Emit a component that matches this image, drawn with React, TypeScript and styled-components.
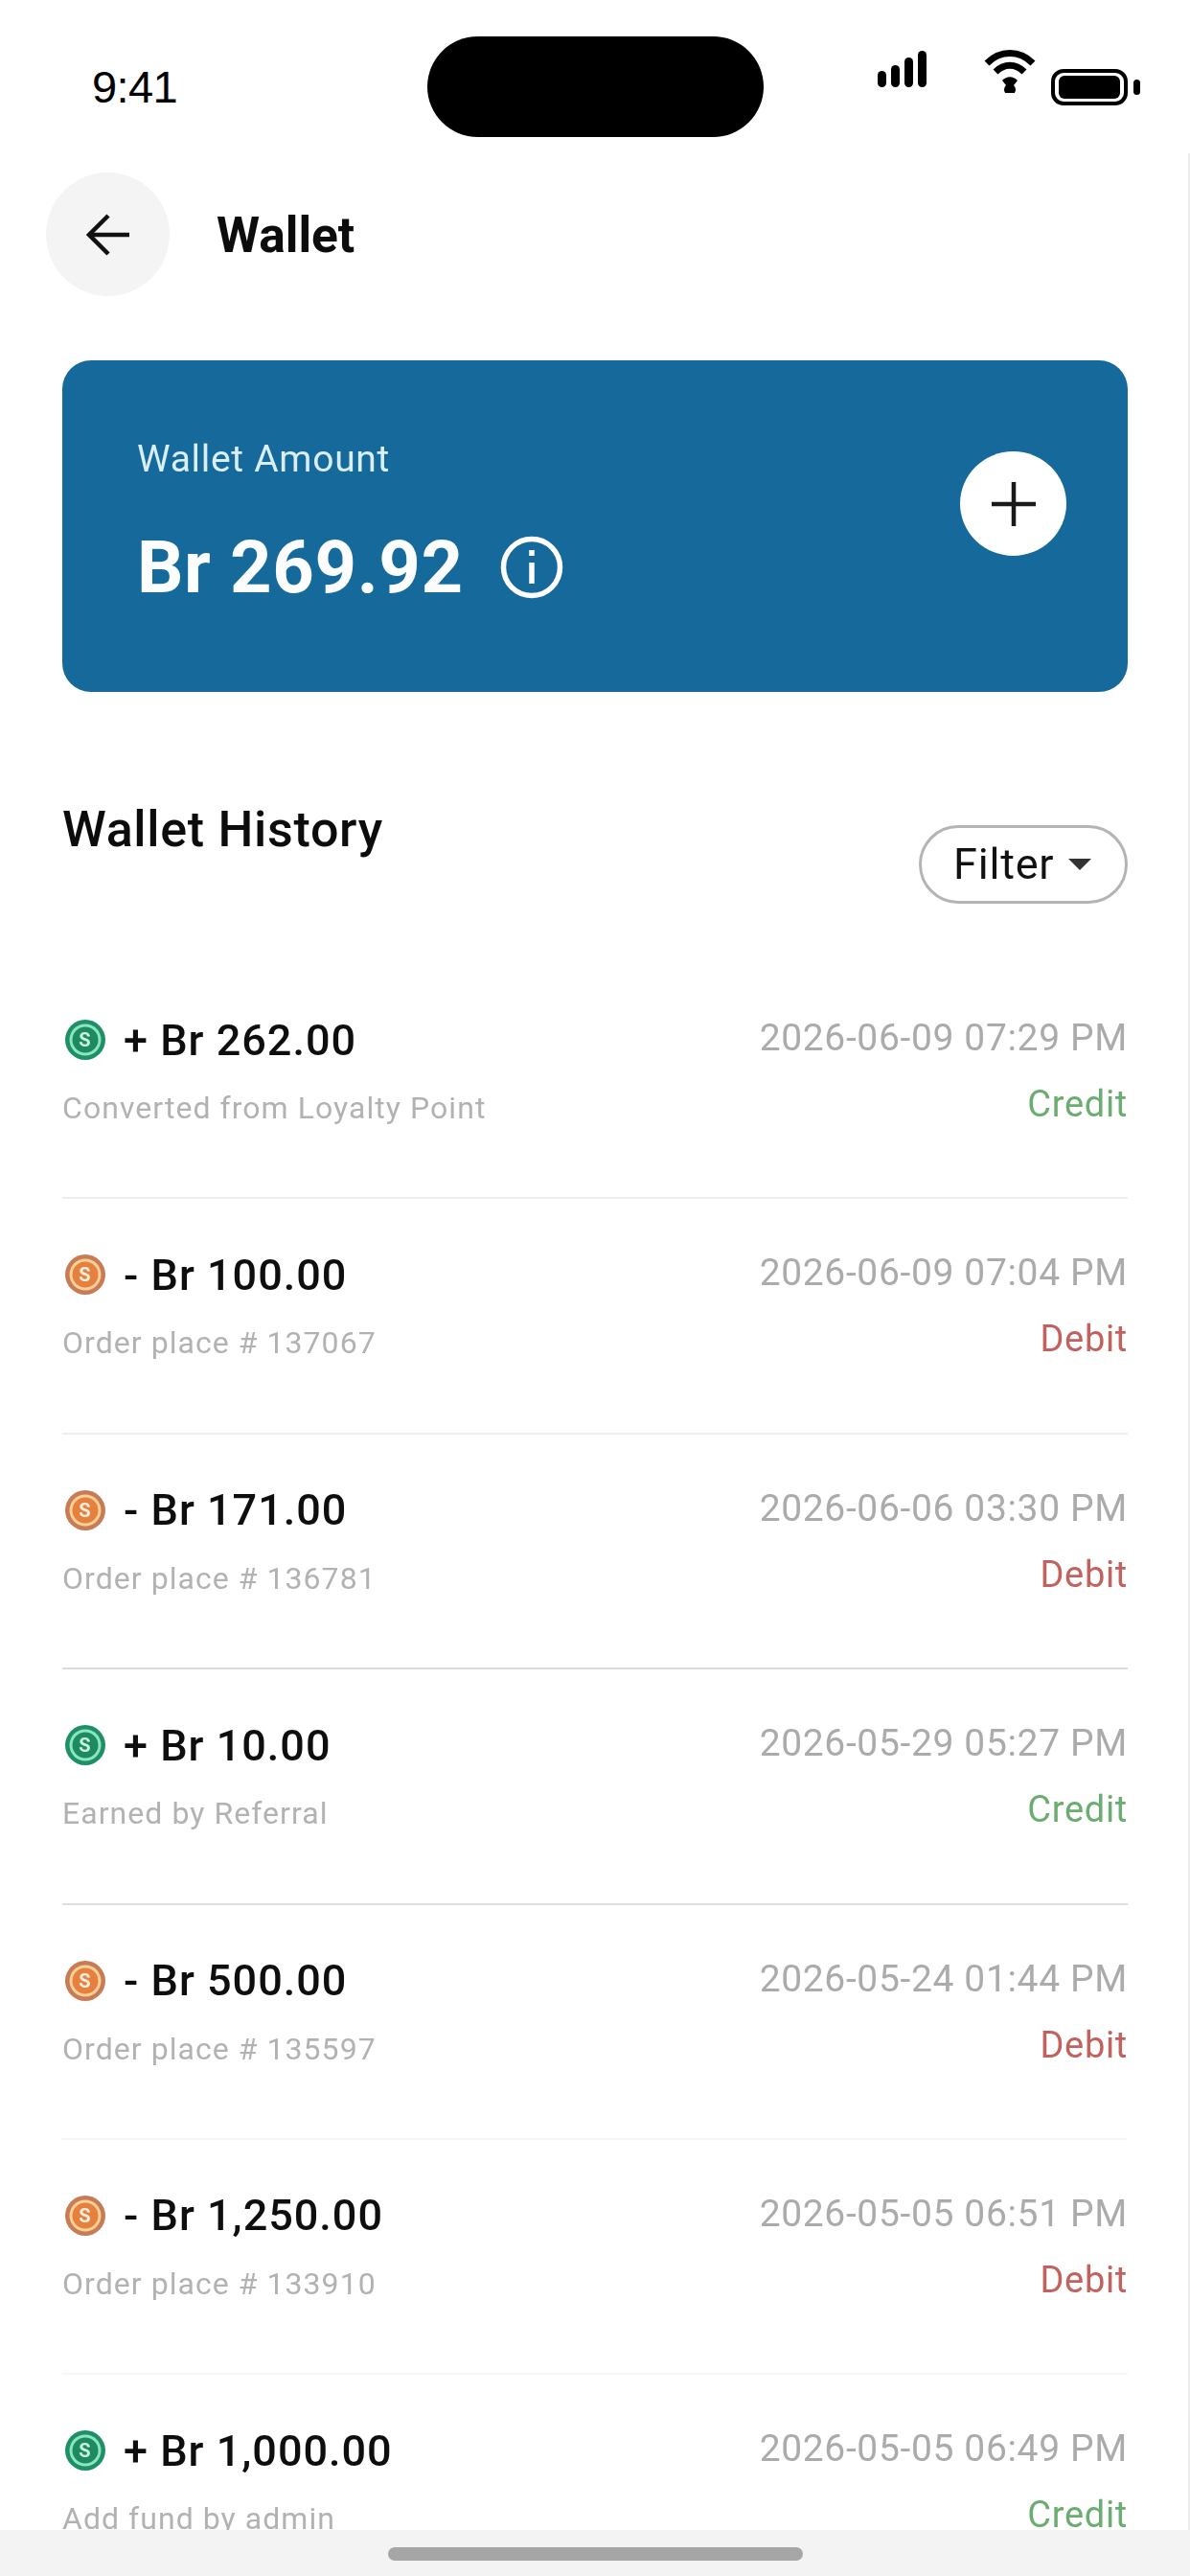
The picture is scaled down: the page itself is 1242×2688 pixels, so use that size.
import { FC } from "react";
import styled, { createGlobalStyle } from "styled-components";

const GlobalStyle = createGlobalStyle`
  html, body { margin: 0; padding: 0; background: #fff; }
  * { box-sizing: border-box; }
`;

// page shell
const Page = styled.div`
  width: 1242px;
  height: 2688px;
  display: flex;
  flex-direction: column;
  overflow: hidden;
  background: #fff;
  font-family: Roboto, "Liberation Sans", sans-serif;
  color: #0c0c0c;
`;

// status bar
const StatusBar = styled.div`
  height: 160px;
  flex: none;
  display: flex;
  align-items: flex-start;
  padding: 38px 0 0 96px;
`;

const Clock = styled.div`
  width: 350px;
  margin-top: 30px;
  font: 400 47px/46px "Liberation Sans", Arial, sans-serif;
  letter-spacing: -0.6px;
  color: #000;
`;

const Island = styled.div`
  width: 351px;
  height: 105px;
  border-radius: 53px;
  background: #000;
`;

const StatusIcons = styled.div`
  display: flex;
  align-items: flex-start;
  margin-left: 119px;
  svg { display: block; flex: none; }
`;

const Signal = styled.svg`
  margin-top: 15px;
`;

const Wifi = styled.svg`
  margin: 13px 0 0 60px;
`;

const Battery = styled.svg`
  margin: 34px 0 0 16px;
`;

// the app area of the screenshot is soft, the status bar is not
const Body = styled.main`
  flex: 1;
  min-height: 0;
  overflow: hidden;
  border-right: 2px solid #ececec;
  filter: blur(0.7px);
`;

// header
const Header = styled.header`
  display: flex;
  align-items: center;
  gap: 49px;
  padding: 20px 0 0 48px;
`;

const BackButton = styled.button`
  width: 129px;
  height: 129px;
  border: 0;
  border-radius: 50%;
  padding: 0;
  display: flex;
  align-items: center;
  justify-content: center;
  background: #f4f4f4;
`;

const Title = styled.h1`
  margin: 2px 0 0;
  font-size: 51.5px;
  line-height: 60px;
  font-weight: 700;
`;

// wallet card
const Card = styled.section`
  margin: 67px 63px 0 65px;
  height: 346px;
  border-radius: 30px;
  background: #16699b;
  display: flex;
  align-items: flex-start;
  justify-content: space-between;
  padding: 81px 64px 0 78px;
`;

const CardLabel = styled.div`
  font-size: 39px;
  line-height: 44px;
  letter-spacing: 0.7px;
  color: #d9eef7;
`;

const Balance = styled.div`
  display: flex;
  align-items: center;
  gap: 38px;
  margin-top: 48px;
  font-size: 76px;
  line-height: 86px;
  font-weight: 700;
  letter-spacing: 0.6px;
  color: #fbfdfe;
`;

const AddButton = styled.button`
  width: 111px;
  height: 109px;
  margin-top: 14px;
  border: 0;
  border-radius: 50%;
  padding: 0;
  display: flex;
  align-items: center;
  justify-content: center;
  background: #fff;
`;

// history
const HistoryHead = styled.div`
  display: flex;
  align-items: flex-start;
  justify-content: space-between;
  margin: 114px 63px 0 65px;
`;

const HistoryTitle = styled.h2`
  margin: 0;
  font-size: 52px;
  line-height: 60px;
  font-weight: 500;
  letter-spacing: 0.7px;
`;

const FilterButton = styled.button`
  width: 218px;
  height: 82px;
  margin-top: 25px;
  border: 3px solid #b4b4b4;
  border-radius: 41px;
  padding: 0 0 0 33px;
  display: flex;
  align-items: center;
  gap: 15px;
  background: #fff;
  font: 400 45px/50px Roboto, sans-serif;
  letter-spacing: 0.8px;
  color: #111;
`;

const List = styled.div`
  margin: 63px 63px 0 65px;
`;

const Row = styled.div<{ $line: string }>`
  height: 245.4px;
  padding-top: 53px;
  display: grid;
  grid-template-columns: 1fr auto;
  align-content: start;
  row-gap: 18px;
  border-bottom: 2px solid ${({ $line }) => $line};
`;

const Amount = styled.div`
  display: flex;
  align-items: center;
  gap: 19px;
  height: 52px;
  padding-left: 3px;
  font-size: 45px;
  font-weight: 500;
  letter-spacing: 1px;
  color: #0e0e0e;
  svg { flex: none; }
`;

const DateText = styled.div`
  height: 52px;
  line-height: 48px;
  text-align: right;
  font-size: 39px;
  letter-spacing: 0.65px;
  color: #ababab;
`;

const Note = styled.div`
  font-size: 32px;
  line-height: 40px;
  letter-spacing: 1.05px;
  color: #b2b2b2;
  margin-top: 7px;
`;

const Kind = styled.div<{ $credit: boolean }>`
  text-align: right;
  font-size: 38px;
  line-height: 44px;
  letter-spacing: 0.7px;
  margin-top: 1px;
  color: ${({ $credit }) => ($credit ? "#6bad70" : "#c2625e")};
`;

// bottom bar
const HomeBar = styled.div`
  height: 48px;
  flex: none;
  display: flex;
  justify-content: center;
  padding-top: 18px;
  background: #f3f3f3;
`;

const HomeIndicator = styled.div`
  width: 433px;
  height: 14px;
  border-radius: 7px;
  background: #a6a6a6;
`;

// ==========================================================================
type CoinProps = { credit: boolean };
// ==========================================================================

const Coin: FC<CoinProps> = ({ credit }) => {
  const c = credit
    ? { edge: "#1f8f66", ring: "#8ae6c2", core: "#1d8a60", glyph: "#c9f3e0" }
    : { edge: "#c87c55", ring: "#fbcf98", core: "#e5803f", glyph: "#fdeedd" };
  return (
    <svg width="42" height="42" viewBox="0 0 42 42">
      <circle cx="21" cy="21" r="21" fill={c.edge} />
      <circle cx="21" cy="21" r="16.5" fill={c.ring} />
      <circle cx="21" cy="21" r="13.5" fill={c.core} />
      <text x="21" y="28" textAnchor="middle" fontFamily="Roboto" fontSize="20" fontWeight="700" fill={c.glyph}>
        S
      </text>
    </svg>
  );
};

const history = [
  { sign: "+", amount: "Br 262.00", date: "2026-06-09 07:29 PM", note: "Converted from Loyalty Point", line: "#eeeeee" },
  { sign: "-", amount: "Br 100.00", date: "2026-06-09 07:04 PM", note: "Order place # 137067", line: "#eeeeee" },
  { sign: "-", amount: "Br 171.00", date: "2026-06-06 03:30 PM", note: "Order place # 136781", line: "#dcdcdc" },
  { sign: "+", amount: "Br 10.00", date: "2026-05-29 05:27 PM", note: "Earned by Referral", line: "#dedede" },
  { sign: "-", amount: "Br 500.00", date: "2026-05-24 01:44 PM", note: "Order place # 135597", line: "#f6f6f6" },
  { sign: "-", amount: "Br 1,250.00", date: "2026-05-05 06:51 PM", note: "Order place # 133910", line: "#f6f6f6" },
  { sign: "+", amount: "Br 1,000.00", date: "2026-05-05 06:49 PM", note: "Add fund by admin", line: "#f6f6f6" },
];

const App: FC = () => (
  <Page>
    <GlobalStyle />
    <StatusBar>
      <Clock>9:41</Clock>
      <Island />
      <StatusIcons>
        <Signal width="51" height="38" viewBox="0 0 51 38" fill="#000">
          <rect x="0" y="21" width="9" height="17" rx="4.5" />
          <rect x="14" y="15" width="9" height="23" rx="4.5" />
          <rect x="28" y="7" width="9" height="31" rx="4.5" />
          <rect x="42" y="0" width="9" height="38" rx="4.5" />
        </Signal>
        <Wifi width="54" height="46" viewBox="0 0 54 46" fill="none" stroke="#000">
          <path d="M3 15 C17 1 37 1 51 15" strokeWidth="7" />
          <path d="M12 24 C21 15 33 15 42 24" strokeWidth="7" />
          <path d="M19 33 C24 28 30 28 35 33 L31 38 A6 6 0 1 1 23 38 Z" fill="#000" stroke="none" />
        </Wifi>
        <Battery width="93" height="38" viewBox="0 0 93 38" fill="none">
          <rect x="2" y="2" width="76" height="34" rx="11" stroke="#000" strokeWidth="4" />
          <rect x="8" y="7" width="64" height="24" rx="6" fill="#000" />
          <rect x="86" y="11" width="7" height="16" rx="3.5" fill="#000" />
        </Battery>
      </StatusIcons>
    </StatusBar>
    <Body>
      <Header>
        <BackButton aria-label="Back">
          <svg width="46" height="44" viewBox="0 0 46 44" fill="none" stroke="#111" strokeWidth="4.5">
            <path d="M23 2 L3 22 L23 42" />
            <path d="M3 22 H45" />
          </svg>
        </BackButton>
        <Title>Wallet</Title>
      </Header>
      <Card>
        <div>
          <CardLabel>Wallet Amount</CardLabel>
          <Balance>
            Br 269.92
            <svg width="66" height="66" viewBox="0 0 66 66" fill="none" stroke="#fff" strokeWidth="5.5">
              <circle cx="33" cy="33" r="29.5" />
              <path d="M33 28 V50" />
              <path d="M33 15 V21" />
            </svg>
          </Balance>
        </div>
        <AddButton aria-label="Add">
          <svg width="46" height="46" viewBox="0 0 46 46" stroke="#1a1a1a" strokeWidth="4.5">
            <path d="M23 0 V46 M0 23 H46" />
          </svg>
        </AddButton>
      </Card>
      <HistoryHead>
        <HistoryTitle>Wallet History</HistoryTitle>
        <FilterButton>
          Filter
          <svg width="24" height="12" viewBox="0 0 24 12" fill="#333">
            <path d="M0 0 H24 L12 12 Z" />
          </svg>
        </FilterButton>
      </HistoryHead>
      <List>
        {history.map((item) => {
          const credit = item.sign === "+";
          return (
            <Row key={item.date} $line={item.line}>
              <Amount>
                <Coin credit={credit} />
                {item.sign} {item.amount}
              </Amount>
              <DateText>{item.date}</DateText>
              <Note>{item.note}</Note>
              <Kind $credit={credit}>{credit ? "Credit" : "Debit"}</Kind>
            </Row>
          );
        })}
      </List>
    </Body>
    <HomeBar>
      <HomeIndicator />
    </HomeBar>
  </Page>
);

export default App;
